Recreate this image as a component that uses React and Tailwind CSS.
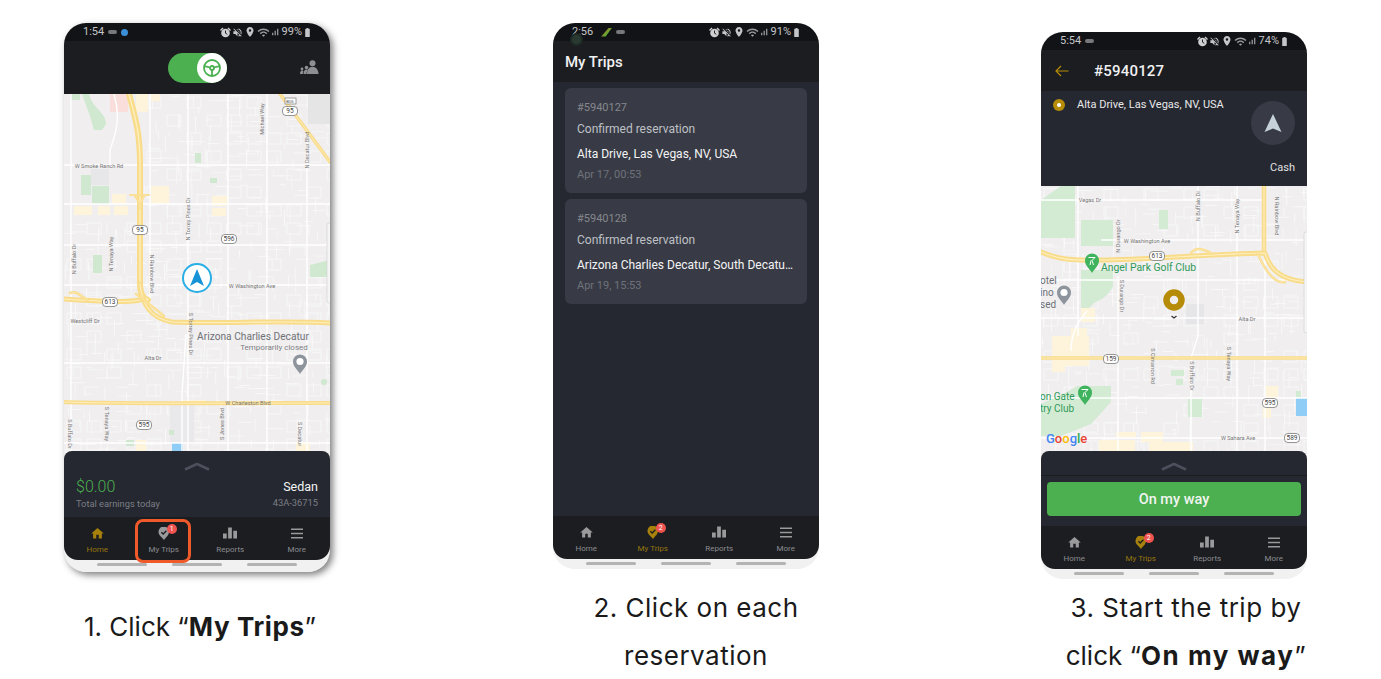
import React from "react";
import { MdVolumeOff, MdLocationOn, MdWifi, MdSignalCellularAlt, MdBatteryFull, MdHome } from "react-icons/md";

const roboto = "font-['Roboto',sans-serif]";

function streets(w, h, seed, skip) {
  let r = seed;
  const rand = () => (r = (r * 16807) % 2147483647) / 2147483647;
  const out = [];
  for (let x = 0; x < w; x += 20) {
    for (let y = 0; y < h; y += 18) {
      const n = 1 + Math.floor(rand() * 3);
      const blocked = skip && skip(x, y);
      for (let i = 0; i < n; i++) {
        const a = x + rand() * 16;
        const b = y + rand() * 14;
        const horiz = rand() > 0.5;
        const len = 6 + rand() * 12;
        if (blocked) continue;
        if (horiz) out.push(`M${a.toFixed(1)} ${b.toFixed(1)}h${len.toFixed(1)}`);
        else out.push(`M${a.toFixed(1)} ${b.toFixed(1)}v${len.toFixed(1)}`);
      }
      const box = rand();
      if (!blocked && box > 0.5) {
        out.push(`M${(x + 3).toFixed(1)} ${(y + 3).toFixed(1)}h14v11h-14z`);
      }
    }
  }
  return out.join("");
}

const Shield = ({ x, y, n }) => (
  <g>
    <rect x={x - 7.5} y={y - 4.5} width="15" height="9" rx="3.5" fill="#fff" stroke="#6a6a6a" strokeWidth="0.7" />
    <text x={x} y={y + 2.4} fontSize="6.5" textAnchor="middle" fill="#444" fontFamily="Roboto">{n}</text>
  </g>
);

const Label = ({ x, y, t, rot, size = 5.6, color = "#777", anchor = "middle" }) => (
  <text
    x={x}
    y={y}
    fontSize={size}
    fill={color}
    textAnchor={anchor}
    fontFamily="Roboto"
    transform={rot ? `rotate(${rot} ${x} ${y})` : undefined}
  >
    {t}
  </text>
);

const Hwy = ({ d, w = 5 }) => (
  <g fill="none" strokeLinecap="round" strokeLinejoin="round">
    <path d={d} stroke="#f9dc8a" strokeWidth={w} />
    <path d={d} stroke="#fff0c2" strokeWidth={w * 0.22} />
  </g>
);

const Pin = ({ x, y, fill, children }) => (
  <g transform={`translate(${x} ${y})`}>
    <path d="M0 10C-2 6-7 3-7 -2.5A7 7 0 0 1 7 -2.5C7 3 2 6 0 10Z" fill={fill} />
    {children}
  </g>
);

function MapOne() {
  return (
    <svg viewBox="0 0 266 363" className="block w-[266px] h-[363px]">
      <rect width="266" height="363" fill="#f0eeef" />
      <path
        d={streets(266, 363, 4711, (x, y) => x < 80 && y < 110)}
        stroke="#fafafa"
        strokeWidth="0.8"
        fill="none"
      />
      <g fill="#fdf4db">
        <rect x="72" y="0" width="12" height="18" />
        <rect x="87" y="0" width="9" height="7" />
        <rect x="87" y="92" width="18" height="18" />
        <rect x="48" y="100" width="14" height="10" />
        <rect x="10" y="112" width="18" height="9" />
        <rect x="34" y="112" width="12" height="9" />
        <rect x="50" y="112" width="14" height="9" />
        <rect x="148" y="102" width="16" height="10" />
        <rect x="148" y="114" width="14" height="8" />
        <path d="M118 306h24v4h-24z" />
        <rect x="72" y="346" width="10" height="14" />
        <rect x="232" y="348" width="14" height="12" />
      </g>
      <rect x="46" y="0" width="18" height="18" fill="#f9dedb" />
      <rect x="244" y="0" width="22" height="30" fill="#e6e5e5" />
      <rect x="27" y="75" width="18" height="16" fill="#e7e7e9" />
      <rect x="106" y="310" width="24" height="40" fill="#e9e8ea" />
      <rect x="108" y="349" width="11" height="14" fill="#8fcdf6" />
      <g fill="#cfe8cf">
        <path d="M18 0H25C28 14 42 18 42 30L38 36H30L26 22Z" />
        <rect x="7" y="0" width="9" height="6" />
        <rect x="17" y="81" width="10" height="20" />
        <rect x="28" y="92" width="17" height="18" />
        <rect x="131" y="59" width="6" height="10" />
        <rect x="146" y="84" width="7" height="5" />
        <path d="M246 183v-12l20-5v17z" />
        <rect x="29" y="161" width="9" height="18" />
        <rect x="62" y="346" width="8" height="6" />
        <rect x="105" y="336" width="5" height="5" />
        <circle cx="260" cy="288" r="3" />
      </g>
      <g stroke="#fff" strokeWidth="1.4" fill="none">
        <path d="M7 0V363M86 0V210M124 0V363M164 0V363M203 0V363M243 40V363M0 71H266M0 110H266M0 151H266M0 191H266M0 269H266M0 349H266M50 0C58 26 50 44 46 56V71M122 240L118 300V363" />
      </g>
      <Hwy d="M65 0C72 26 76 40 76 70V190C76 198 78 204 84 206" w={6} />
      <Hwy d="M66 101H85M70 101C73 104 75 108 76 114M81 101C78 104 77 108 76 114" w={2} />
      <Hwy d="M216 0L266 68" w={3.5} />
      <Hwy d="M0 205C30 207 60 209 76 206M76 190C78 210 86 224 108 228C160 230 220 226 266 229" />
      <Hwy d="M6 199C14 196 18 204 24 206M72 200C82 208 88 212 100 222" w={2.5} />
      <Hwy d="M0 308C60 310 200 309 266 309" w={4} />
      <Shield x={76} y={136} n="95" />
      <Shield x={165} y={145} n="596" />
      <Shield x={46} y={208} n="613" />
      <Shield x={80} y={331} n="595" />
      <Shield x={226} y={17} n="95" />
      <rect x="221" y="4" width="11" height="6" fill="#fff" stroke="#666" strokeWidth="0.6" />
      <Label x={226} y={9} t="BUS" size={4} color="#444" />
      <Label x={35} y={74} t="W Smoke Ranch Rd" />
      <Label x={188} y={194} t="W Washington Ave" />
      <Label x={21} y={229} t="Westcliff Dr" />
      <Label x={89} y={266} t="Alta Dr" />
      <Label x={184} y={311} t="W Charleston Blvd" />
      <Label x={126} y={125} t="N Torrey Pines Dr" rot={-90} />
      <Label x={12} y={165} t="N Buffalo Dr" rot={-90} />
      <Label x={49} y={160} t="N Tenaya Way" rot={-90} />
      <Label x={86} y={180} t="N Rainbow Blvd" rot={90} />
      <Label x={200} y={25} t="Michael Way" rot={-90} />
      <Label x={245} y={56} t="N Decatur Blvd" rot={-90} />
      <Label x={125} y={240} t="S Torrey Pines Dr" rot={90} />
      <Label x={41} y={330} t="S Tenaya Way" rot={90} />
      <Label x={160} y={330} t="S Jones Blvd" rot={-90} />
      <Label x={234} y={340} t="S Decatur" rot={90} />
      <Label x={4} y={340} t="S Buffalo Dr" rot={90} />
      <Label x={189} y={246} t="Arizona Charlies Decatur" size={10.2} color="#6e7177" />
      <Label x={210} y={256} t="Temporarily closed" size={8} color="#7d7f84" />
      <Pin x={236} y={270} fill="#8d949b">
        <circle cx="0" cy="-2.5" r="3.6" fill="#fff" />
      </Pin>
      <rect x="263" y="129" width="4" height="80" rx="2" fill="#f5f5f5" stroke="#cfcfcf" strokeWidth="0.6" />
      <circle cx="133" cy="184" r="14" fill="#fff" stroke="#29aee6" strokeWidth="2" />
      <path d="M133 175L140 192L133 188L126 192Z" fill="#1593d6" />
    </svg>
  );
}

function MapThree() {
  return (
    <svg viewBox="0 0 266 271" className="block w-[266px] h-[271px]">
      <rect width="266" height="271" fill="#f0eeef" />
      <path d={streets(266, 271, 90210)} stroke="#fafafa" strokeWidth="0.8" fill="none" />
      <g fill="#d3ead3">
        <path d="M0 14L20 0H34V52H0ZM40 34H72V60H40ZM40 84H72V100C64 118 50 112 46 128H40Z" />
        <path d="M0 250V218L26 206L36 200H70V216L50 238L20 250Z" />
        <rect x="118" y="24" width="9" height="19" />
        <rect x="130" y="184" width="13" height="6" />
        <rect x="135" y="193" width="7" height="6" />
        <rect x="147" y="213" width="14" height="18" />
        <rect x="255" y="205" width="5" height="6" />
      </g>
      <g fill="#fdf4db">
        <path d="M11 150H48V180H24V186H11Z" />
        <rect x="30" y="142" width="16" height="18" />
        <rect x="40" y="122" width="14" height="14" />
        <rect x="225" y="200" width="12" height="12" />
        <rect x="222" y="220" width="8" height="12" />
        <rect x="58" y="254" width="36" height="17" />
        <rect x="100" y="246" width="22" height="10" />
        <rect x="108" y="256" width="44" height="15" />
        <rect x="75" y="246" width="20" height="6" />
      </g>
      <rect x="255" y="212" width="11" height="18" fill="#8fcdf6" />
      <rect x="145" y="118" width="18" height="20" fill="#e6e6e8" />
      <g stroke="#fff" strokeWidth="1.4" fill="none">
        <path d="M37 0V150M77 90V271M157 0V150L150 172V271M196 0V271M224 70V271M0 14H224M60 54H266M0 94H266M0 132H266M0 212H266M0 252H266M30 165C30 145 38 135 46 125" />
      </g>
      <Hwy d="M223 0V66" w={4.5} />
      <Hwy d="M0 66C24 76 40 74 60 74C100 74 170 68 224 67C228 80 236 94 266 96" />
      <Hwy d="M216 66C222 80 232 98 244 96M150 67C156 60 164 64 170 67" w={2.5} />
      <Hwy d="M0 172H266" w={3.5} />
      <Shield x={116} y={70} n="613" />
      <Shield x={70} y={173} n="159" />
      <Shield x={229} y={217} n="595" />
      <Shield x={251} y={252} n="589" />
      <Label x={49} y={16} t="Vegas Dr" />
      <Label x={106} y={57} t="W Washington Ave" />
      <Label x={159} y={20} t="N Buffalo Dr" rot={-90} />
      <Label x={198} y={30} t="N Tenaya Way" rot={-90} />
      <Label x={79} y={50} t="N Durango Dr" rot={-90} />
      <Label x={234} y={30} t="N Rainbow Blvd" rot={90} />
      <Label x={79} y={110} t="S Durango Dr" rot={90} />
      <Label x={206} y={135} t="Alta Dr" />
      <Label x={110} y={180} t="S Cimarron Rd" rot={90} />
      <Label x={149} y={190} t="S Buffalo Dr" rot={90} />
      <Label x={186} y={178} t="S Tenaya Way" rot={90} />
      <Label x={197} y={254} t="W Sahara Ave" />
      <Label x={60} y={85} t="Angel Park Golf Club" size={10.4} color="#2e9a57" anchor="start" />
      <Label x={-1} y={98} t="otel" size={10} color="#6e7177" anchor="start" />
      <Label x={-1} y={110} t="ino" size={10} color="#6e7177" anchor="start" />
      <Label x={-1} y={122} t="sed" size={10} color="#6e7177" anchor="start" />
      <Label x={-1} y={214} t="on Gate" size={10} color="#2e9a57" anchor="start" />
      <Label x={-1} y={226} t="try Club" size={10} color="#2e9a57" anchor="start" />
      <Pin x={51} y={77} fill="#3fb35d">
        <path d="M-3.500 -5.500H3L0 -2.500L1.500 2M-1 -2.500L-2 2" stroke="#fff" strokeWidth="1" fill="none" />
      </Pin>
      <Pin x={44} y={209} fill="#3fb35d">
        <path d="M-3.500 -5.500H3L0 -2.500L1.500 2M-1 -2.500L-2 2" stroke="#fff" strokeWidth="1" fill="none" />
      </Pin>
      <Pin x={23} y={109} fill="#8d949b">
        <circle cx="0" cy="-2.5" r="3.6" fill="#fff" />
      </Pin>
      <text x="5" y="257" fontSize="13" fontFamily="Roboto" fontWeight="500">
        <tspan fill="#4285f4">G</tspan>
        <tspan fill="#ea4335">o</tspan>
        <tspan fill="#fbbc05">o</tspan>
        <tspan fill="#4285f4">g</tspan>
        <tspan fill="#34a853">l</tspan>
        <tspan fill="#ea4335">e</tspan>
      </text>
      <rect x="263" y="46" width="4" height="101" rx="2" fill="#f5f5f5" stroke="#cfcfcf" strokeWidth="0.6" />
      <circle cx="133" cy="114" r="7.5" fill="none" stroke="#b58b07" strokeWidth="6.5" />
      <path d="M130.500 130L133 132L135.500 130" stroke="#333" strokeWidth="1.2" fill="none" />
    </svg>
  );
}

const Chevron = () => (
  <svg width="26" height="9" viewBox="0 0 26 9" className="block">
    <path d="M1 7.5L13 2L25 7.5" stroke="#4d505c" strokeWidth="2.6" fill="none" strokeLinejoin="round" />
  </svg>
);

const TripPin = ({ color }) => (
  <svg width="12" height="13" viewBox="0 0 12 13">
    <path d="M6 13C4 10 .5 8.500.5 5A5.200 5.200 0 0 1 11 4.500C11 8.500 8 10 6 13Z" fill={color} />
    <path d="M3.400 5.200L5.200 7L8.400 3.800" stroke="#1c1d21" strokeWidth="1.300" fill="none" />
  </svg>
);

const BarsIcon = ({ color }) => (
  <svg width="14" height="12" viewBox="0 0 15 12">
    <path d="M0 6.500h4V12H0zM5.500 0h4v12h-4zM11 3.500h4V12h-4z" fill={color} />
  </svg>
);

const MenuIcon = ({ color }) => (
  <svg width="12" height="11" viewBox="0 0 12 11">
    <path d="M0 .5h12v1.400H0zM0 4.800h12v1.400H0zM0 9.100h12v1.400H0z" fill={color} />
  </svg>
);

const AlarmIcon = () => (
  <svg width="11" height="11" viewBox="0 0 11 11" className="shrink-0">
    <path d="M0 3L2.500.5L3.500 1.500L1 4zM11 3L8.500.5L7.500 1.500L10 4z" fill="#cfcfd1" />
    <circle cx="5.500" cy="6" r="4.300" fill="#cfcfd1" />
    <path d="M5.500 3.500V6.200L7.300 7.300" stroke="#121316" strokeWidth="0.9" fill="none" />
  </svg>
);

const NavItem = ({ active, icon, label, badge, highlight }) => (
  <div className="relative flex-1 flex flex-col items-center pt-[9px]">
    <div className="relative h-[14px] flex items-center justify-center">
      {icon}
      {badge && (
        <span className="absolute left-[9px] top-[-2px] w-[10px] h-[10px] rounded-full bg-[#ef5350] text-white text-[7px] leading-[10px] text-center">
          {badge}
        </span>
      )}
    </div>
    <span className={`text-[8px] leading-[10px] mt-[5px] ${active ? "text-[#96750f]" : "text-[#8b8c90]"}`}>{label}</span>
    {highlight && (
      <div className="absolute left-[4.500px] top-[2px] w-[56px] h-[44px] border-[3px] border-[#ee5a2a] rounded-[8px]" />
    )}
  </div>
);

const BottomNav = ({ active, badge, highlight }) => {
  const gold = "#a6810c";
  const grey = "#9a9a9c";
  return (
    <div className="flex h-[43px] bg-[#1c1d21] rounded-b-[14px]">
      <NavItem active={active === "home"} label="Home" icon={<MdHome size={15} color={active === "home" ? gold : grey} />} />
      <NavItem
        active={active === "trips"}
        label="My Trips"
        badge={badge}
        highlight={highlight}
        icon={<TripPin color={active === "trips" ? gold : grey} />}
      />
      <NavItem label="Reports" icon={<BarsIcon color={grey} />} />
      <NavItem label="More" icon={<MenuIcon color={grey} />} />
    </div>
  );
};

const HomeBar = ({ h }) => (
  <div className={`flex justify-center gap-[25px] pt-[3px] bg-[#f1f1f1] ${h}`}>
    <span className="w-[50px] h-[3px] rounded-full bg-[#b3b3b3]" />
    <span className="w-[50px] h-[3px] rounded-full bg-[#b3b3b3]" />
    <span className="w-[50px] h-[3px] rounded-full bg-[#b3b3b3]" />
  </div>
);

const StatusBar = ({ time, left, pct }) => (
  <div className="relative flex items-center h-[18px] bg-[#121316] text-[#c4c5c8] text-[11px] leading-[18px]">
    <span className="ml-[19px]">{time}</span>
    <span className="ml-[4px] flex items-center gap-[4px]">{left}</span>
    <span className="ml-auto mr-[17px] flex items-center">
      <AlarmIcon />
      <MdVolumeOff size={11} className="ml-[1px]" />
      <MdLocationOn size={12} className="ml-[1px]" />
      <MdWifi size={13} className="ml-[1px] text-[#9b9ca0]" />
      <MdSignalCellularAlt size={10} className="text-[#9b9ca0]" />
      <span className="ml-[2px]">{pct}</span>
      <MdBatteryFull size={11} />
    </span>
  </div>
);

const Tiny = () => <span className="w-[9px] h-[4px] rounded-full bg-[#77787c]" />;

const Trip = ({ id, addr, date }) => (
  <div className="h-[105px] rounded-[6px] bg-[#383b45] pl-[12px] pr-[10px] pt-[13px]">
    <div className="text-[11px] leading-[13px] text-[#85878e]">{id}</div>
    <div className="text-[12px] leading-[14px] mt-[8px] text-[#bfc0c5]">Confirmed reservation</div>
    <div className="text-[12px] leading-[14px] mt-[11px] text-[#f4f4f5] whitespace-nowrap">{addr}</div>
    <div className="text-[11px] leading-[13px] mt-[7px] text-[#6f727a]">{date}</div>
  </div>
);

function PhoneOne() {
  return (
    <div className={`w-[266px] h-[549px] rounded-[22px] overflow-hidden bg-[#f1f1f1] shadow-[3px_3px_7px_rgba(0,0,0,0.5)] ${roboto}`}>
      <StatusBar
        time="1:54"
        pct="99%"
        left={
          <>
            <Tiny />
            <span className="w-[7px] h-[7px] rounded-full bg-[#3b8fd6]" />
          </>
        }
      />
      <div className="relative flex items-center justify-center h-[53px] bg-[#1c1d21]">
        <div className="flex justify-end w-[59px] h-[30px] rounded-full bg-[#4caf50]">
          <div className="flex items-center justify-center w-[30px] h-[30px] rounded-full bg-white">
            <svg width="20" height="20" viewBox="0 0 20 20" fill="none" stroke="#4caf50" strokeWidth="1.800">
              <circle cx="10" cy="10" r="8" />
              <circle cx="10" cy="10" r="2" />
              <path d="M2.500 8.300C5 8.300 6.500 9 8 9.500M17.500 8.300C15 8.300 13.500 9 12 9.500M10 12V17.500" />
            </svg>
          </div>
        </div>
        <svg width="19" height="14" viewBox="0 0 19 14" className="absolute right-[11px] top-[19px]">
          <circle cx="12.500" cy="3.300" r="3" fill="#8e8f93" />
          <path d="M7 14c0-4 2-7.200 5.500-7.200S18.500 10 18.500 14z" fill="#8e8f93" />
          <circle cx="6.500" cy="7.500" r="1.800" fill="#8e8f93" />
          <path d="M3.500 14c0-2.500 1-4.500 3-4.500 1 0 1.500.4 1.500.4C7 11 6.500 12.500 6.500 14z" fill="#8e8f93" />
          <circle cx="2" cy="9" r="1.400" fill="#8e8f93" />
          <path d="M0 14c0-2 .8-3.500 2-3.500s1.500.8 1.500.8C3 12 2.800 13 2.800 14z" fill="#8e8f93" />
        </svg>
      </div>
      <MapOne />
      <div className="relative h-[66px] -mt-[6px] rounded-t-[8px] bg-[#252830]">
        <div className="flex justify-center pt-[11px]">
          <Chevron />
        </div>
        <div className="flex justify-between px-[12px] pt-[6px]">
          <div>
            <div className="text-[16px] leading-[20px] font-light text-[#4caf50]">$0.00</div>
            <div className="text-[9.300px] leading-[12px] mt-[1px] text-[#7c7e85]">Total earnings today</div>
          </div>
          <div className="text-right">
            <div className="text-[12.500px] leading-[20px] text-[#f4f4f5]">Sedan</div>
            <div className="text-[9.300px] leading-[12px] text-[#7c7e85]">43A-36715</div>
          </div>
        </div>
      </div>
      <BottomNav active="home" badge="1" highlight />
      <HomeBar h="h-[12px]" />
    </div>
  );
}

function PhoneTwo() {
  return (
    <div className={`relative w-[266px] h-[546px] rounded-[22px] overflow-hidden bg-[#f1f1f1] ${roboto}`}>
      <StatusBar
        time="2:56"
        pct="91%"
        left={
          <>
            <span className="ml-[4px] w-[11px] h-[9px] bg-[linear-gradient(135deg,#d33_0%,#5fb12f_60%)] [clip-path:polygon(70%_0,100%_0,40%_100%,0_100%)]" />
            <Tiny />
          </>
        }
      />
      <div className="absolute left-[17px] top-[10px] w-[13px] h-[13px] rounded-full bg-[#2a3a32] border-[2px] border-[#1e2b25]" />
      <div className="flex items-center h-[41px] bg-[#1c1d21] pl-[12px] pt-[1px] text-[15px] font-medium text-[#f1f1f2]">My Trips</div>
      <div className="flex flex-col gap-[6px] h-[434px] bg-[#252830] px-[12px] pt-[6px]">
        <Trip id="#5940127" addr="Alta Drive, Las Vegas, NV, USA" date="Apr 17, 00:53" />
        <Trip id="#5940128" addr="Arizona Charlies Decatur, South Decatu…" date="Apr 19, 15:53" />
      </div>
      <BottomNav active="trips" badge="2" />
      <HomeBar h="h-[11px]" />
    </div>
  );
}

function PhoneThree() {
  return (
    <div className={`w-[266px] h-[547px] rounded-[22px] overflow-hidden bg-[#f1f1f1] ${roboto}`}>
      <StatusBar time="5:54" pct="74%" left={<Tiny />} />
      <div className="flex items-center h-[41px] bg-[#1c1d21] pt-[1px]">
        <svg width="14" height="12" viewBox="0 0 14 12" className="ml-[14px]" fill="none" stroke="#b58b07" strokeWidth="1.200">
          <path d="M13.500 6H1M6 1L1 6L6 11" />
        </svg>
        <span className="ml-[25px] text-[15px] font-medium tracking-[0.2px] text-[#f1f1f2]">#5940127</span>
      </div>
      <div className="relative h-[95px] bg-[#252830]">
        <div className="flex items-center pl-[12px] pt-[7px]">
          <span className="flex items-center justify-center w-[12px] h-[12px] rounded-full bg-[#b58b07]">
            <span className="w-[4px] h-[4px] rounded-full bg-white" />
          </span>
          <span className="ml-[12px] text-[11px] leading-[14px] text-[#e9e9ea]">Alta Drive, Las Vegas, NV, USA</span>
        </div>
        <div className="absolute right-[12px] top-[10px] flex items-center justify-center w-[44px] h-[44px] rounded-full bg-[#383b45]">
          <svg width="18" height="20" viewBox="0 0 18 20">
            <path d="M9 1L17.500 19L9 15.500L.5 19Z" fill="#c5d0d8" />
          </svg>
        </div>
        <div className="absolute right-[12px] top-[70px] text-[11px] leading-[14px] text-[#e0e0e2]">Cash</div>
      </div>
      <MapThree />
      <div className="relative h-[75px] -mt-[6px] rounded-t-[8px] bg-[#252830]">
        <div className="flex justify-center h-[25px] pt-[11px] border-b border-[#1c1d21]">
          <Chevron />
        </div>
        <div className="mx-[6px] mt-[6px] flex items-center justify-center h-[34px] pt-[2px] rounded-[4px] bg-[#4caf50] text-[14.500px] font-medium text-[#f1f5f1]">
          On my way
        </div>
      </div>
      <BottomNav active="trips" badge="2" />
      <HomeBar h="h-[11px]" />
    </div>
  );
}

const capt = "text-[26px] leading-[48px] tracking-[0.5px] text-[#1a1a1a] text-center whitespace-nowrap w-[320px] font-['Inter',sans-serif]";

export default function App() {
  return (
    <div className="flex w-[1381px] h-[679px] overflow-hidden bg-white pl-[64px]">
      <div className="w-[266px] pt-[23px] shrink-0">
        <PhoneOne />
        <div className={`${capt} mt-[31px] ml-[-24px] tracking-normal`}>
          1. Click “<b className="tracking-[0.6px]">My Trips</b>”
        </div>
      </div>
      <div className="w-[266px] ml-[223px] pt-[23px] shrink-0">
        <PhoneTwo />
        <div className={`${capt} mt-[15px] ml-[-17px]`}>
          2. Click on each
          <br />
          reservation
        </div>
      </div>
      <div className="w-[266px] ml-[222px] pt-[32px] shrink-0">
        <PhoneThree />
        <div className={`${capt} mt-[5px] ml-[-15px]`}>
          3. Start the trip by
          <br />
          <span className="tracking-normal">click “</span>
          <b className="tracking-[1.5px]">On my way</b>”
        </div>
      </div>
    </div>
  );
}
